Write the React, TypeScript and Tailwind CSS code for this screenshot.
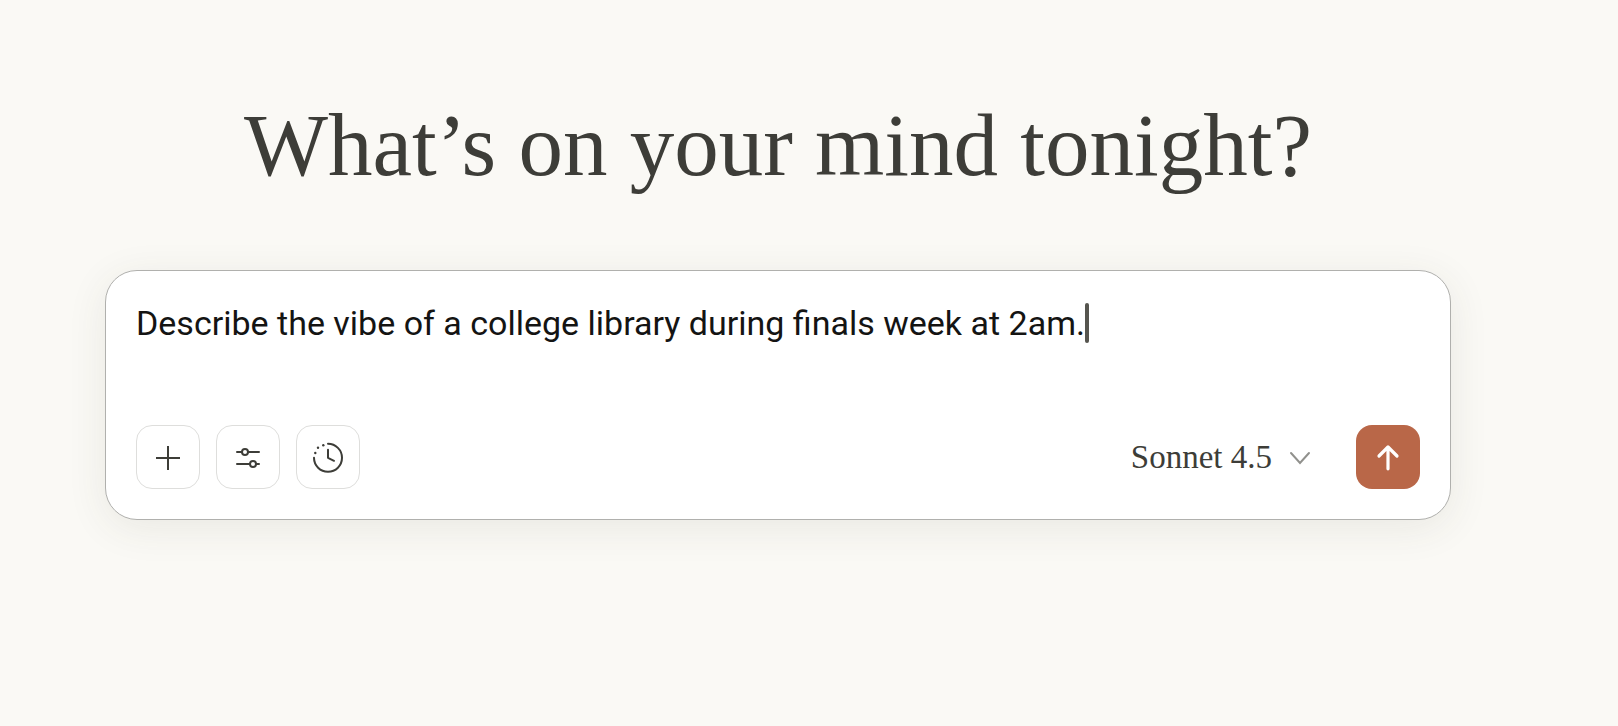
import { useState } from "react";

const toolButton =
  "flex size-16 items-center justify-center rounded-2xl border border-[#dededc] bg-white text-[#3d3d38]";

function PlusIcon() {
  return (
    <svg className="size-8" viewBox="0 0 32 32" fill="none" stroke="currentColor" strokeWidth="2" aria-hidden="true">
      <path d="M16 5v24M4 17h24" />
    </svg>
  );
}

function SlidersIcon() {
  return (
    <svg className="size-8" viewBox="0 0 32 32" fill="none" stroke="currentColor" strokeWidth="2" strokeLinecap="round" aria-hidden="true">
      <path d="M5 11h5M16 11h11M5 23h13M24 23h3" />
      <circle cx="13" cy="11" r="3" />
      <circle cx="21" cy="23" r="3" />
    </svg>
  );
}

function HistoryIcon() {
  return (
    <svg className="size-8" viewBox="0 0 32 32" fill="none" stroke="currentColor" strokeWidth="2" strokeLinecap="round" strokeLinejoin="round" aria-hidden="true">
      <path d="M16 2.8a14 14 0 1 1-14 14" />
      <path d="M16 8.8v8l6 3" />
      <g fill="currentColor" stroke="none">
        <circle cx="3.3" cy="12" r="1.2" />
        <circle cx="6" cy="6.8" r="1.2" />
        <circle cx="11.3" cy="4.2" r="1.2" />
      </g>
    </svg>
  );
}

export default function App() {
  const [prompt, setPrompt] = useState(
    "Describe the vibe of a college library during finals week at 2am.",
  );
  const [model, setModel] = useState("Sonnet 4.5");

  return (
    <main className="min-h-screen bg-[#faf9f5] pt-24 pr-[167px] pb-24 pl-[105px]">
      <h1 className="text-center font-['Liberation_Serif',serif] text-[89px] leading-[98px] text-[#3d3d38]">
        What’s on your mind tonight?
      </h1>

      <form
        onSubmit={(event) => event.preventDefault()}
        className="mt-[76px] rounded-[32px] border border-[#b0b0ad] bg-white p-[30px] shadow-[0_8px_40px_rgba(61,61,40,0.09)]"
      >
        <div className="flex h-[124px] items-start">
          <textarea
            aria-label="Prompt"
            rows={1}
            value={prompt}
            onChange={(event) => setPrompt(event.target.value)}
            className="field-sizing-content max-w-full resize-none overflow-hidden bg-transparent font-['Roboto',sans-serif] text-[34px] leading-[44px] text-[#141413] outline-none"
          />
          <span className="mt-[2px] h-10 w-1 shrink-0 rounded-xs bg-[#56554f]" />
        </div>

        <div className="flex items-center gap-4">
          <button type="button" aria-label="Add content" className={toolButton}>
            <PlusIcon />
          </button>
          <button type="button" aria-label="Tools" className={toolButton}>
            <SlidersIcon />
          </button>
          <button type="button" aria-label="Extended thinking" className={toolButton}>
            <HistoryIcon />
          </button>

          <div className="ml-auto flex items-center gap-4">
            <select
              aria-label="Model"
              value={model}
              onChange={(event) => setModel(event.target.value)}
              className="field-sizing-content appearance-none bg-transparent font-['Liberation_Serif',serif] text-[33px] leading-10 text-[#3d3d38] outline-none"
            >
              <option>Sonnet 4.5</option>
            </select>
            <svg className="mr-7 h-4 w-6" viewBox="0 0 24 16" fill="none" stroke="#91918d" strokeWidth="2" strokeLinecap="round" aria-hidden="true">
              <path d="M3 4l9 10 9-10" />
            </svg>
            <button
              type="submit"
              aria-label="Send message"
              className="flex size-16 items-center justify-center rounded-2xl bg-[#b96748] text-white"
            >
              <svg className="size-8" viewBox="0 0 32 32" fill="none" stroke="currentColor" strokeWidth="3.2" strokeLinecap="round" strokeLinejoin="round" aria-hidden="true">
                <path d="M16 27.8V6M7 15l9-9 9 9" />
              </svg>
            </button>
          </div>
        </div>
      </form>
    </main>
  );
}
